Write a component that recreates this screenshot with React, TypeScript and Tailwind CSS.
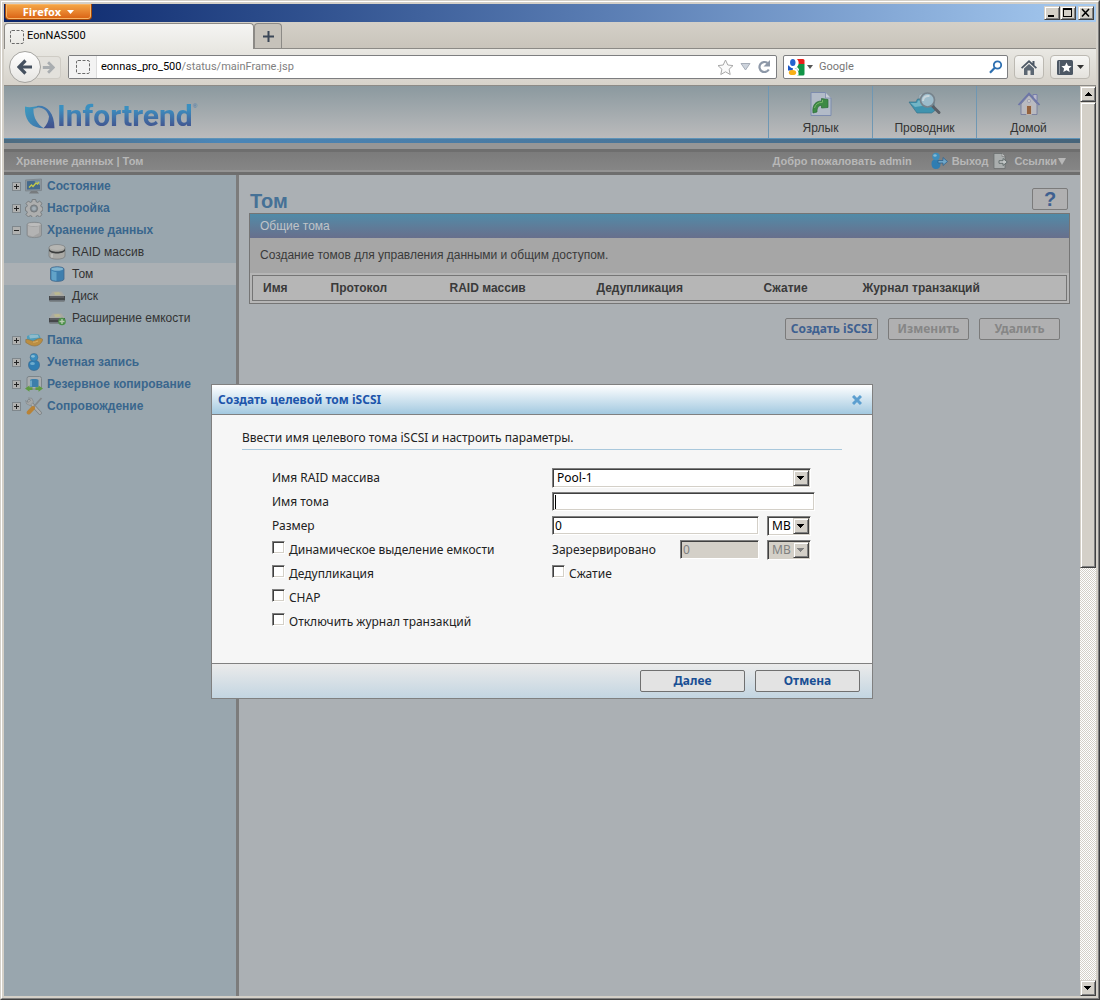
import type { ComponentProps, ReactNode } from "react";
import clsx from "clsx";

const RAISED =
  "border border-t-[#d4d0c8] border-l-[#d4d0c8] border-r-[#404040] border-b-[#404040] bg-[#d4d0c8] shadow-[inset_1px_1px_0_#fff,inset_-1px_-1px_0_#808080]";
const SUNKEN =
  "border border-t-[#808080] border-l-[#808080] border-r-white border-b-white shadow-[inset_1px_1px_0_#404040,inset_-1px_-1px_0_#d4d0c8]";

function Svg({ size = 18, children }: { size?: number; children: ReactNode }) {
  return (
    <svg width={size} height={size} viewBox="0 0 18 18" className="shrink-0">
      {children}
    </svg>
  );
}

/* Tree icons */
const StatusIcon = () => (
  <Svg>
    <path d="M.5 3 16.500 2v11.500L.5 14z" fill="#8a949b" stroke="#7b848a" strokeWidth=".8" />
    <path d="M2 4.300 15 3.300v9L2 12.600z" fill="#456a8c" />
    <path d="M9 3.800 15 3.300v5z" fill="#7795aa" />
    <path d="m4 10.500 2.500-2.500 1.500 1.500L11 6l1.500 1L14 5" fill="none" stroke="#c3c94a" strokeWidth="1.400" />
    <path d="M6 14h6l2 2.500H4z" fill="#777b7e" />
  </Svg>
);
const GearIcon = () => (
  <Svg>
    <g fill="#aeafaf" stroke="#6d7174" strokeWidth=".8">
      <path d="m7.300.5 3.400 0 .5 2.300 1.500.6 2-1.300 2.300 2.300-1.300 2 .6 1.500 1.500.4v3.300l-1.500.5-.6 1.500 1.300 2-2.300 2.300-2-1.300-1.500.6-.5 2H7.300l-.5-2-1.500-.6-2 1.300L1 15.600l1.300-2-.6-1.500-1.300-.5V8.300l1.300-.4.6-1.500L1 4.400l2.300-2.300 2 1.300 1.500-.6z" />
      <circle cx="9" cy="9.500" r="3.600" fill="#858f96" />
    </g>
    <circle cx="9" cy="9.500" r="2" fill="#a3aeb5" />
  </Svg>
);
const StorageIcon = () => (
  <Svg>
    <path d="M2 3.500C2 .5 16.500.5 16.500 3.500v10.500c0 3.500-14.500 3.500-14.500 0z" fill="#a2a2a2" stroke="#80868a" strokeWidth=".8" />
    <path d="M3 4.500c2 1.800 8 1.800 11 .5V12l-6 3.500-5-1.500z" fill="#b3b3b3" />
    <ellipse cx="9.200" cy="3.500" rx="6.400" ry="1.600" fill="#bcbcbc" />
  </Svg>
);
const RaidIcon = () => (
  <Svg>
    <path d="M1 4.500C1 .8 17 .8 17 4.500V13c0 4.200-16 4.200-16 0z" fill="#a9a9a5" stroke="#77787a" strokeWidth=".7" />
    <ellipse cx="9" cy="4.500" rx="7.300" ry="2.500" fill="#b6b6b3" />
    <path d="M1 5.500c1 4.300 15 4.300 16 0v2c-1 4-15 4-16 0z" fill="#3b3d3d" />
    <path d="M4 11v3.500" stroke="#bebebb" strokeWidth="2" />
  </Svg>
);
const VolumeIcon = () => (
  <Svg>
    <path d="M2.500 4C2.500 1 16 1 16 4v10c0 3.200-13.500 3.200-13.500 0z" fill="#3f7fae" stroke="#41678a" strokeWidth=".8" />
    <path d="M3.500 5.500c2 1.500 3.500 1.500 5 1.600v8.600c-2-.1-5-.6-5-2z" fill="#62a3c8" />
    <ellipse cx="9.200" cy="4" rx="6" ry="1.700" fill="#82b4ce" />
  </Svg>
);
const DiskShape = () => (
  <>
    <path d="M4.500 4.500h9l3.500 5H1z" fill="#a9aaa4" />
    <path d="m6 5.500 5-.5 2 2.500-6 .5z" fill="#bcb98f" />
    <path d="M1 9h16v4.500H1z" fill="#45474a" />
    <path d="M2 10h14" stroke="#77797b" />
    <path d="M1.500 14.500h15" stroke="#7c8488" />
  </>
);
const DiskIcon = () => (
  <Svg>
    <DiskShape />
  </Svg>
);
const ExpandIcon = () => (
  <Svg>
    <DiskShape />
    <circle cx="14" cy="12.500" r="3.800" fill="#4b8f49" />
    <path d="M14 10v5M11.500 12.500h5" stroke="#b7c9b0" strokeWidth="1.400" />
  </Svg>
);
const FolderIcon = () => (
  <Svg>
    <path d="m2 5 5-2 7 .5 2 4-8 4-6-3z" fill="#4f9dbb" />
    <path d="m4 4.500 3-1 6 .5 1 2.500-9 1z" fill="#8dbbcb" />
    <path d="M.8 8.500C3.500 8 6 9.500 8 10.200l4.500-2.200c2-1 4.700-.5 5.200.5-1 4.500-5.200 6.500-8.200 6.500-4 0-6.700-2.500-8.700-3.500z" fill="#bb8e42" stroke="#8f7040" strokeWidth=".6" />
    <path d="M8 11c2 .5 3.500-.5 5-1" stroke="#dcb26a" fill="none" />
  </Svg>
);
const UserIcon = () => (
  <Svg>
    <path d="M3.500 12c0-4 2.500-4.500 5.500-4.500s5.500.5 5.500 4.500c0 2.500-1.500 5.500-5.500 5.500S3.500 14.500 3.500 12z" fill="#2f7db2" stroke="#3a6789" strokeWidth=".6" />
    <circle cx="9" cy="4.300" r="3.900" fill="#3a8dbf" stroke="#3a6789" strokeWidth=".5" />
    <ellipse cx="8" cy="3.300" rx="1.900" ry="1.400" fill="#86bad3" />
    <ellipse cx="7.500" cy="10.500" rx="2.400" ry="1.600" fill="#6faccc" />
  </Svg>
);
const BackupIcon = () => (
  <Svg>
    <rect x="2" y="1.500" width="14.500" height="12.500" rx="2" fill="#a9adaf" stroke="#7c858a" />
    <path d="M5 5c0-1.500 8.500-1.500 8.500 0v7H5z" fill="#3c7fab" />
    <path d="M6 5.500v6" stroke="#79b1cd" strokeWidth="1.600" />
    <path d="m0 13.500 4.500-3v1.800h3v2.600h-3v1.800zM18 13.500l-4.500-3v1.800h-3v2.600h3v1.800z" fill="#5f9a43" />
  </Svg>
);
const ToolsIcon = () => (
  <Svg>
    <path d="m4 4 11 12" stroke="#7b8083" strokeWidth="3.600" strokeLinecap="round" />
    <path d="m4 4 11 12" stroke="#acaeae" strokeWidth="2.200" strokeLinecap="round" />
    <path d="M.5 3.500 3 5.500 5.500 3.500 3.500.8l3.500.6L8.500 5l-3.300 3.500L1.700 7z" fill="#a5a7a7" stroke="#7b8083" strokeWidth=".5" />
    <path d="m16.500 1-8 9" stroke="#85898b" strokeWidth="1.800" />
    <path d="m8 11-4.300 4.500" stroke="#b98336" strokeWidth="4" strokeLinecap="round" />
  </Svg>
);

/* Header icons */
const ShortcutIcon = () => (
  <svg width="24" height="26" viewBox="0 0 24 26">
    <path d="M2 1.500h14.500L22 7v17.500H2z" fill="#b2bbc8" stroke="#7d8cae" />
    <path d="M16.500 1.500V7H22" fill="#c8cdd4" stroke="#7d8cae" strokeWidth=".8" />
    <path d="M4 22c-1-8.500 3-12 8.500-12V7.500l6.500 1v8L12.500 17v-2.500C9 14.300 8 17.500 8 21z" fill="#3d8a45" stroke="#2d6c3a" strokeWidth=".7" />
    <path d="M5.500 17c1-3.500 3.500-5.700 8-5.700V9" fill="none" stroke="#79b56a" />
  </svg>
);
const ExplorerIcon = () => (
  <svg width="34" height="26" viewBox="0 0 34 26">
    <path d="M11 8V4l3-1.500h9V10z" fill="#aab8c0" stroke="#7f949e" strokeWidth=".6" />
    <path d="M1 11h7l1.500-3h16l1 12-3 2H9z" fill="#3f93ae" stroke="#3a7489" strokeWidth=".7" />
    <path d="M2.500 12H9l1-2.500h12L21 14l-14 2z" fill="#73b5c6" />
    <path d="m24.500 15 6.500 6.500" stroke="#5b5f66" strokeWidth="3" strokeLinecap="round" />
    <circle cx="19.500" cy="9" r="7" fill="#9dbccb" stroke="#77838c" strokeWidth="1.700" />
    <path d="M15 10c0-4 3-5.500 6.500-5" fill="none" stroke="#c9d6dc" strokeWidth="2" />
  </svg>
);
const HouseIcon = () => (
  <svg width="24" height="26" viewBox="0 0 24 26">
    <path d="M16 3.500h4V10h-4z" fill="#b8b8c8" stroke="#6c75a8" strokeWidth=".8" />
    <path d="M4 13v10.500h16V13l-8-9z" fill="#b9bac0" stroke="#70779b" strokeWidth=".8" />
    <path d="M1.500 14 12 2.500 22.500 14" fill="none" stroke="#6c75a8" strokeWidth="1.800" />
    <path d="M9.500 14.500h5v9h-5z" fill="#94623f" stroke="#c6c3bf" strokeWidth=".8" />
    <circle cx="12" cy="10" r="1.600" fill="#ccc" stroke="#8b8da5" strokeWidth=".6" />
  </svg>
);
const LogoutIcon = () => (
  <Svg>
    <path d="M1.500 12c0-3.500 1.500-4.500 4.500-4.500s4.500 1 4.500 4.500c0 3-1.500 5-4.500 5s-4.500-2-4.500-5z" fill="#2f7db2" />
    <circle cx="6" cy="4.500" r="3.700" fill="#3d8dbc" />
    <ellipse cx="5" cy="3.500" rx="1.700" ry="1.300" fill="#86bad3" />
    <path d="M8 8.500h5V5.500l4.500 4L13 13.500v-2.500H8z" fill="#6fa6c8" stroke="#2f628e" strokeWidth=".8" />
  </Svg>
);
const LinksIcon = () => (
  <Svg>
    <path d="M2 1.500h8L13 4.500V16.500H2z" fill="#aaaeae" stroke="#666a6a" strokeWidth=".7" />
    <path d="M10 1.500v3h3" fill="#c5c8c8" stroke="#777" strokeWidth=".6" />
    <path d="M7 8.700h4V6.500l4.300 3.500L11 13.500v-2.200H7z" fill="#c2c6c6" stroke="#5c6666" strokeWidth=".9" />
  </Svg>
);

const PageIcon = () => (
  <svg width="14" height="14" viewBox="0 0 14 14" className="shrink-0">
    <rect x=".5" y=".5" width="13" height="13" rx="1.500" fill="none" stroke="#6b6b6b" strokeDasharray="3 1.500" />
  </svg>
);

const DownArrow = ({ muted }: { muted?: boolean }) => (
  <svg width="8" height="4" viewBox="0 0 8 4" shapeRendering="crispEdges">
    <path d="M0 0h7L3.500 4z" fill={muted ? "#808080" : "#000"} />
  </svg>
);

function TitleBar() {
  return (
    <div className="flex h-[18px] items-center justify-between bg-linear-to-r from-[#0a246a] to-[#a6caf0] pr-0.5 pl-px">
      <button className="flex h-4 w-[87px] items-center justify-center gap-1.5 self-start rounded-b-sm border border-t-0 border-[#a44a0a] bg-linear-to-b from-[#f5a948] to-[#d9600f] font-['Open_Sans',sans-serif] text-[11px] leading-4 font-bold text-white shadow-[inset_0_0_0_1px_#f8b465]">
        Firefox
        <svg width="7" height="4" viewBox="0 0 7 4">
          <path d="M0 0h7L3.500 4z" fill="#fff" />
        </svg>
      </button>
      <div className="flex">
        <button aria-label="Свернуть" className={clsx(RAISED, "h-3.5 w-4")}>
          <svg width="14" height="12" viewBox="0 0 14 12">
            <path d="M3 8h6v2H3z" />
          </svg>
        </button>
        <button aria-label="Развернуть" className={clsx(RAISED, "h-3.5 w-4")}>
          <svg width="14" height="12" viewBox="0 0 14 12" shapeRendering="crispEdges">
            <path d="M2.500 2.500h8v7h-8z" fill="none" stroke="#000" />
            <path d="M2 1h9v2H2z" />
          </svg>
        </button>
        <button aria-label="Закрыть" className={clsx(RAISED, "ml-0.5 h-3.5 w-4")}>
          <svg width="14" height="12" viewBox="0 0 14 12">
            <path d="m3 2 7 7.500M10 2 3 9.500" stroke="#000" strokeWidth="1.600" />
          </svg>
        </button>
      </div>
    </div>
  );
}

function TabStrip() {
  return (
    <div className="flex h-[27px] items-end border-b border-[#8c8a86] bg-linear-to-b from-[#d4d0c8] to-[#c9c4bb]">
      <div className="-mb-px flex h-[26px] w-[250px] items-center gap-0.5 rounded-t-sm border border-b-0 border-[#8c8a86] bg-linear-to-b from-[#f5f5f3] to-[#e9e8e3] pl-[5px]">
        <PageIcon />
        <span className="pl-px font-[Roboto,sans-serif] text-[11px] text-black">EonNAS500</span>
      </div>
      <button
        aria-label="Новая вкладка"
        className="flex h-[25px] w-7 items-center justify-center rounded-t-sm border border-b-0 border-[#8c8a86] bg-[#c6c2ba]"
      >
        <svg width="11" height="11" viewBox="0 0 11 11">
          <path d="M5.500 0v11M0 5.500h11" stroke="#3b4757" strokeWidth="2" />
        </svg>
      </button>
    </div>
  );
}

function NavBar() {
  return (
    <div className="flex h-[37px] items-center border-b border-[#8c8a86] bg-linear-to-b from-[#e9e8e3] to-[#d6d2ca] px-[5px] font-[Roboto,sans-serif] text-[11px]">
      <button
        aria-label="Назад"
        className="relative z-10 flex size-8 shrink-0 items-center justify-center rounded-full border border-[#a5a4a0] bg-linear-to-b from-white to-[#e6e5e2]"
      >
        <svg width="16" height="16" viewBox="0 0 16 16">
          <path d="M8.500 1.500 2 8l6.500 6.500M2.500 8H15" fill="none" stroke="#44505f" strokeWidth="3.200" />
        </svg>
      </button>
      <button
        aria-label="Вперёд"
        className="-ml-1 flex h-[23px] w-6 shrink-0 items-center justify-center rounded-r-sm border border-l-0 border-[#cfccc5] bg-[#e3e1dc]"
      >
        <svg width="13" height="13" viewBox="0 0 16 16">
          <path d="M7.500 1.500 14 8l-6.500 6.500M13.500 8H1" fill="none" stroke="#a9adb0" strokeWidth="3.400" />
        </svg>
      </button>
      <div className="ml-[7px] flex h-6 flex-1 items-center rounded-xs border border-[#7d7e80] bg-white">
        <span className="flex h-full w-7 items-center justify-center border-r border-[#dcdcdc] bg-[#f3f3f3]">
          <PageIcon />
        </span>
        <a href="#" className="flex-1 pl-1 text-[#808080]">
          <span className="text-black">eonnas_pro_500</span>/status/mainFrame.jsp
        </a>
        <span className="flex items-center gap-[6px] pr-[5px]">
          <svg width="17" height="17" viewBox="0 0 17 17">
            <path d="m8.500 1 2.300 5 5.200.6-3.900 3.600 1.100 5.300-4.700-2.700-4.700 2.700 1.100-5.300L1 6.600 6.200 6z" fill="#fafafa" stroke="#a8a8a8" />
          </svg>
          <svg width="11" height="8" viewBox="0 0 11 8">
            <path d="M1 .5h9L5.500 7z" fill="#cdd3dc" stroke="#a6adb8" />
          </svg>
          <svg width="14" height="14" viewBox="0 0 14 14">
            <path d="M11.800 9.500A5 5 0 1 1 10.500 3" fill="none" stroke="#8d98a8" strokeWidth="2.200" />
            <path d="M13 0v6.500H6.500z" fill="#8d98a8" />
          </svg>
        </span>
      </div>
      <div className="ml-1.5 flex h-6 w-[225px] items-center rounded-xs border border-[#7d7e80] bg-white pr-1 pl-1">
        <svg width="17" height="17" viewBox="0 0 17 17" className="shrink-0">
          <path d="M8 0h7a1.500 1.500 0 0 1 1.500 1.500V5H9z" fill="#e8201a" />
          <path d="M8 5h8.500v10a1.500 1.500 0 0 1-1.500 1.500H9z" fill="#109447" />
          <path d="M0 6.500h5l3 3-3 2H0z" fill="#1a55c4" />
          <circle cx="5.500" cy="4" r="5.200" fill="#fff" />
          <ellipse cx="4.800" cy="3.500" rx="2.700" ry="3.500" fill="#2463d1" />
          <path d="M5 8.500c4 1 6 3 5.500 8H4z" fill="#fff" />
          <ellipse cx="4.500" cy="13.500" rx="3.700" ry="2.600" fill="#f7b017" />
          <path d="M8 7.500c2 1 3.500 2.500 3 4.500L8.500 10z" fill="#fff" />
        </svg>
        <svg width="6" height="4" viewBox="0 0 6 4" className="ml-0.5">
          <path d="M0 0h6L3 4z" fill="#555" />
        </svg>
        <input
          aria-label="Поиск"
          placeholder="Google"
          className="ml-[6px] min-w-0 flex-1 outline-none placeholder:text-[#767676]"
        />
        <svg width="14" height="14" viewBox="0 0 14 14">
          <circle cx="8.500" cy="5" r="3.700" fill="none" stroke="#2d6fb0" strokeWidth="1.800" />
          <path d="M5.800 7.800 1 12.800" stroke="#2d6fb0" strokeWidth="2.200" />
        </svg>
      </div>
      <button
        aria-label="Домашняя страница"
        className="ml-1.5 flex h-6 w-[30px] items-center justify-center rounded-sm border border-[#bcb9b2] bg-linear-to-b from-[#f7f7f5] to-[#e4e2dd]"
      >
        <svg width="16" height="15" viewBox="0 0 16 15">
          <path d="M8 0 0 7.500l1.200 1.200L8 2.500l6.800 6.200L16 7.500l-2.500-2.300V1h-2v2.200z" fill="#4c5764" />
          <path d="M3 8.500 8 4l5 4.500V15H9.500v-4.500h-3V15H3z" fill="#5c6773" />
        </svg>
      </button>
      <button
        aria-label="Закладки"
        className="mr-px ml-1.5 flex h-6 w-10 items-center justify-center gap-1 rounded-sm border border-[#bcb9b2] bg-linear-to-b from-[#f7f7f5] to-[#e4e2dd]"
      >
        <svg width="16" height="15" viewBox="0 0 16 15">
          <rect width="16" height="15" rx="1.500" fill="#4c5764" />
          <path d="M2.500 1v13" stroke="#8e97a2" strokeWidth="1" />
          <path d="m9.500 2.500 1.500 3.300 3.600.4-2.700 2.400.8 3.500-3.200-1.800-3.200 1.800.8-3.500-2.700-2.400 3.600-.4z" fill="#fff" />
        </svg>
        <svg width="7" height="4" viewBox="0 0 7 4">
          <path d="M0 0h7L3.500 4z" fill="#333" />
        </svg>
      </button>
    </div>
  );
}

function Logo() {
  return (
    <a href="#" className="flex items-center gap-0.5">
      <svg width="30" height="25" viewBox="0 0 30 25">
        <defs>
          <linearGradient id="swoosh" x1="0" y1="0" x2="1" y2="1">
            <stop offset="0" stopColor="#3d9abf" />
            <stop offset="1" stopColor="#3f74ab" />
          </linearGradient>
          <linearGradient id="fin" x1="0" y1="0" x2="0" y2="1">
            <stop offset="0" stopColor="#3f7db2" />
            <stop offset="1" stopColor="#41508b" />
          </linearGradient>
        </defs>
        <path d="M0 2.500c3 1 8 .8 13-.5v1.200C11.500 4.200 10 4.300 8.500 4.500 8 13 12 20 19 24.300 6 24.500-1 15.500 0 2.500z" fill="url(#swoosh)" />
        <path d="M12 2c9-1.500 17.500 6 17.500 22.300H18.500C22 20.500 23.500 17.500 24 12.500 22.500 7 18.500 3.300 12 3.300z" fill="url(#fin)" />
      </svg>
      <span className="flex items-start">
        <span className="bg-linear-to-b from-[#3a8fc0] from-30% to-[#41508b] to-85% bg-clip-text font-[Roboto,sans-serif] text-[30px] leading-9 font-bold text-transparent">
          Infortrend
        </span>
        <span className="pt-1 text-[6px] leading-2 text-[#3f78ad]">®</span>
      </span>
    </a>
  );
}

const shortcuts = [
  { label: "Ярлык", Icon: ShortcutIcon },
  { label: "Проводник", Icon: ExplorerIcon },
  { label: "Домой", Icon: HouseIcon },
];

function AppHeader() {
  return (
    <header>
      <div className="flex h-[52px] justify-between bg-linear-to-b from-[#8b999f] to-[#bbbbbc] pl-[21px]">
        <div className="flex items-center pt-2">
          <Logo />
        </div>
        <nav className="flex">
          {shortcuts.map(({ label, Icon }) => (
            <a
              key={label}
              href="#"
              className="flex w-[104px] flex-col items-center border-l border-[#6f97b3] pt-[5px] text-[12px] leading-4 text-[#333]"
            >
              <Icon />
              <span className="pt-[3px]">{label}</span>
            </a>
          ))}
        </nav>
      </div>
      <div className="h-[5px] border-t border-[#5e93b8] bg-linear-to-r from-[#4d6b80] via-[#4a86b8] via-20% to-[#46647a]" />
      <div className="h-1.5 bg-[#969696]" />
      <div className="flex h-[26px] items-center justify-between border-t-3 border-b-3 border-[#6e6e6e] bg-linear-to-b from-[#7b7b7b] to-[#878787] pr-3.5 pb-0.5 pl-3 text-[11px] font-bold text-[#b7b7b7] shadow-[inset_0_-2px_0_#949494]">
        <span>Хранение данных | Том</span>
        <div className="flex items-center">
          <span>Добро пожаловать admin</span>
          <a href="#" className="ml-[18px] flex items-center gap-1">
            <LogoutIcon />
            Выход
          </a>
          <a href="#" className="ml-1 flex items-center gap-1">
            <LinksIcon />
            <span className="flex items-center gap-px">
              Ссылки
              <svg width="8" height="7" viewBox="0 0 8 7">
                <path d="M0 0h8L4 7z" fill="#b7b7b7" />
              </svg>
            </span>
          </a>
        </div>
      </div>
    </header>
  );
}

type Node = { label: string; Icon: () => ReactNode; leaf?: boolean; open?: boolean; current?: boolean };

const tree: Node[] = [
  { label: "Состояние", Icon: StatusIcon },
  { label: "Настройка", Icon: GearIcon },
  { label: "Хранение данных", Icon: StorageIcon, open: true },
  { label: "RAID массив", Icon: RaidIcon, leaf: true },
  { label: "Том", Icon: VolumeIcon, leaf: true, current: true },
  { label: "Диск", Icon: DiskIcon, leaf: true },
  { label: "Расширение емкости", Icon: ExpandIcon, leaf: true },
  { label: "Папка", Icon: FolderIcon },
  { label: "Учетная запись", Icon: UserIcon },
  { label: "Резервное копирование", Icon: BackupIcon },
  { label: "Сопровождение", Icon: ToolsIcon },
];

function Sidebar() {
  return (
    <nav className="w-[235px] shrink-0 border-r-3 border-[#7c7c7c] bg-[#99a6ae] text-[12px]">
      {tree.map(({ label, Icon, leaf, open, current }) => (
        <a
          key={label}
          href="#"
          className={clsx(
            "flex h-[22px] items-center",
            leaf ? "gap-1.5 pl-11 text-[#333]" : "gap-1 pl-2 font-bold text-[#3a668d]",
            current && "bg-[#abb0b4]",
          )}
        >
          {!leaf && (
            <svg width="9" height="9" viewBox="0 0 9 9" shapeRendering="crispEdges">
              <rect x=".5" y=".5" width="8" height="8" fill="#b0b1b0" stroke="#7f878c" />
              <path d={open ? "M2 4.500h5" : "M2 4.500h5M4.500 2v5"} stroke="#222" />
            </svg>
          )}
          <Icon />
          {label}
        </a>
      ))}
    </nav>
  );
}

function PageButton({ className, ...props }: ComponentProps<"button">) {
  return (
    <button
      className={clsx(
        "h-[22px] rounded-xs border border-[#7b7b7b] bg-[#b0b0b1] font-['Noto_Sans',sans-serif] text-[12px] leading-5 font-bold text-[#3f6090] disabled:text-[#868686]",
        className,
      )}
      {...props}
    />
  );
}

function VolumePage() {
  return (
    <main className="flex-1 bg-[#abb0b4] pt-3 pr-2.5 pl-2.5 text-[12px] text-[#3a3a3a]">
      <div className="flex h-[26px] items-end justify-between pr-0.5 pl-px">
        <h1 className="text-[20px] leading-6 font-bold text-[#467196]">Том</h1>
        <button
          aria-label="Справка"
          className="mb-[3px] h-[22px] w-9 rounded-xs border border-[#7b7b7b] bg-[#b0b0b1] text-[20px] leading-5 font-bold text-[#3f6090]"
        >
          ?
        </button>
      </div>
      <section className="border border-[#757575] bg-[#b6b6b6]">
        <h2 className="bg-linear-to-b from-[#508ba8] to-[#676f8c] px-2.5 leading-6 text-[#c0c4c8]">Общие тома</h2>
        <p className="bg-[#a6a6a6] px-2.5 leading-[35px]">Создание томов для управления данными и общим доступом.</p>
        <div className="p-0.5">
          <table className="w-full table-fixed border border-[#757575] text-left leading-6">
            <thead>
              <tr>
                <th className="w-[68px] pl-2.5">Имя</th>
                <th className="w-[119px] pl-2.5">Протокол</th>
                <th className="w-[147px] pl-2.5">RAID массив</th>
                <th className="w-[167px] pl-2.5">Дедупликация</th>
                <th className="w-[99px] pl-2.5">Сжатие</th>
                <th className="pl-2.5">Журнал транзакций</th>
              </tr>
            </thead>
          </table>
        </div>
      </section>
      <div className="flex justify-end gap-2.5 pt-3.5 pr-2.5">
        <PageButton className="w-[93px]">Создать iSCSI</PageButton>
        <PageButton className="w-[81px]" disabled>
          Изменить
        </PageButton>
        <PageButton className="w-[81px]" disabled>
          Удалить
        </PageButton>
      </div>
    </main>
  );
}

function Select({ className, disabled, children, ...props }: ComponentProps<"select">) {
  return (
    <div className={clsx("relative", className)}>
      <select
        disabled={disabled}
        className={clsx(
          SUNKEN,
          "block h-5 w-full appearance-none bg-white pl-1 leading-4 text-black outline-none disabled:bg-[#d4d0c8] disabled:text-[#808080] disabled:opacity-100",
        )}
        {...props}
      >
        {children}
      </select>
      <span
        className={clsx(RAISED, "pointer-events-none absolute inset-y-0.5 right-0.5 flex w-4 items-center justify-center")}
      >
        <DownArrow muted={disabled} />
      </span>
    </div>
  );
}

function TextInput({ className, ...props }: ComponentProps<"input">) {
  return (
    <input
      type="text"
      className={clsx(
        SUNKEN,
        "h-[19px] bg-white px-0.5 text-black outline-none disabled:bg-[#d4d0c8] disabled:text-[#808080]",
        className,
      )}
      {...props}
    />
  );
}

function Checkbox({ label }: { label: string }) {
  return (
    <label className="flex h-6 items-center gap-1">
      <input type="checkbox" className={clsx(SUNKEN, "mb-1 size-[13px] appearance-none bg-white")} />
      {label}
    </label>
  );
}

function CreateTargetDialog() {
  return (
    <div
      role="dialog"
      aria-labelledby="dialog-title"
      className="flex w-[662px] flex-col border border-[#808080] bg-[#f6f6f6] font-['Noto_Sans',sans-serif] text-[12px] text-[#222]"
    >
      <div className="flex h-[30px] items-center justify-between border-b border-[#808080] bg-linear-to-b from-white to-[#a3c9e0] pt-0.5 pr-2.5 pl-1.5">
        <h2 id="dialog-title" className="font-bold text-[#1c55ab]">
          Создать целевой том iSCSI
        </h2>
        <button aria-label="Закрыть окно">
          <svg width="10" height="10" viewBox="0 0 10 10">
            <path d="m1 1 8 8M9 1 1 9" stroke="#5c9fd0" strokeWidth="3" />
          </svg>
        </button>
      </div>
      <form className="px-[30px] pt-3.5 pb-[29px]">
        <p className="border-b border-[#a9c8dc] pb-0.5 leading-[18px]">
          Ввести имя целевого тома iSCSI и настроить параметры.
        </p>
        <div className="grid grid-cols-[280px_1fr] pt-4 pl-[30px] leading-6">
          <label htmlFor="pool">Имя RAID массива</label>
          <div className="flex items-center">
            <Select id="pool" className="w-[259px]">
              <option>Pool-1</option>
            </Select>
          </div>
          <label htmlFor="volume">Имя тома</label>
          <div className="relative flex items-center">
            <TextInput id="volume" className="w-[263px]" />
            <span className="absolute left-[3px] h-3.5 w-px bg-black" />
          </div>
          <label htmlFor="size">Размер</label>
          <div className="flex items-center gap-2">
            <TextInput id="size" defaultValue="0" className="w-[207px]" />
            <Select aria-label="Единица размера" className="w-11">
              <option>MB</option>
            </Select>
          </div>
          <Checkbox label="Динамическое выделение емкости" />
          <div className="flex items-center gap-2">
            <label htmlFor="reserved" className="w-[120px]">
              Зарезервировано
            </label>
            <TextInput id="reserved" defaultValue="0" disabled className="w-[79px]" />
            <Select aria-label="Единица резерва" className="w-11" disabled>
              <option>MB</option>
            </Select>
          </div>
          <Checkbox label="Дедупликация" />
          <Checkbox label="Сжатие" />
          <div className="col-span-2">
            <Checkbox label="CHAP" />
            <Checkbox label="Отключить журнал транзакций" />
          </div>
        </div>
      </form>
      <div className="flex justify-end gap-2.5 border-t border-[#808080] bg-linear-to-b from-[#ebebeb] to-[#c3d5e1] px-3 py-1.5">
        <DialogButton>Далее</DialogButton>
        <DialogButton>Отмена</DialogButton>
      </div>
    </div>
  );
}

function DialogButton({ children }: { children: ReactNode }) {
  return (
    <button className="h-[22px] w-[105px] rounded-xs border border-[#707070] bg-[#e3e3e3] font-['Noto_Sans',sans-serif] text-[12px] leading-5 font-bold text-[#1a4f94]">
      {children}
    </button>
  );
}

function Scrollbar() {
  return (
    <div className="flex w-4 shrink-0 flex-col bg-[repeating-conic-gradient(#fff_0_25%,#d4d0c8_0_50%)] bg-size-[2px_2px]">
      <button aria-label="Вверх" className={clsx(RAISED, "flex h-4 items-center justify-center")}>
        <svg width="7" height="4" viewBox="0 0 7 4" shapeRendering="crispEdges">
          <path d="M0 4h7L3.500 0z" />
        </svg>
      </button>
      <div className="flex flex-1 flex-col">
        <div className={clsx(RAISED, "flex-[53]")} />
        <div className="flex-[47]" />
      </div>
      <button aria-label="Вниз" className={clsx(RAISED, "flex h-4 items-center justify-center")}>
        <DownArrow />
      </button>
    </div>
  );
}

export default function App() {
  return (
    <div className="flex min-h-screen flex-col border border-t-[#d4d0c8] border-r-[#404040] border-b-[#404040] border-l-[#d4d0c8] font-['Liberation_Sans',sans-serif]">
      <div className="flex flex-1 flex-col border border-t-white border-r-[#808080] border-b-[#808080] border-l-white bg-[#d4d0c8] p-0.5">
        <TitleBar />
        <TabStrip />
        <NavBar />
        <div className="flex flex-1">
          <div className="relative flex flex-1 flex-col">
            <AppHeader />
            <div className="flex flex-1">
              <Sidebar />
              <VolumePage />
            </div>
            <div className="absolute inset-0 flex items-center justify-center">
              <CreateTargetDialog />
            </div>
          </div>
          <Scrollbar />
        </div>
      </div>
    </div>
  );
}
